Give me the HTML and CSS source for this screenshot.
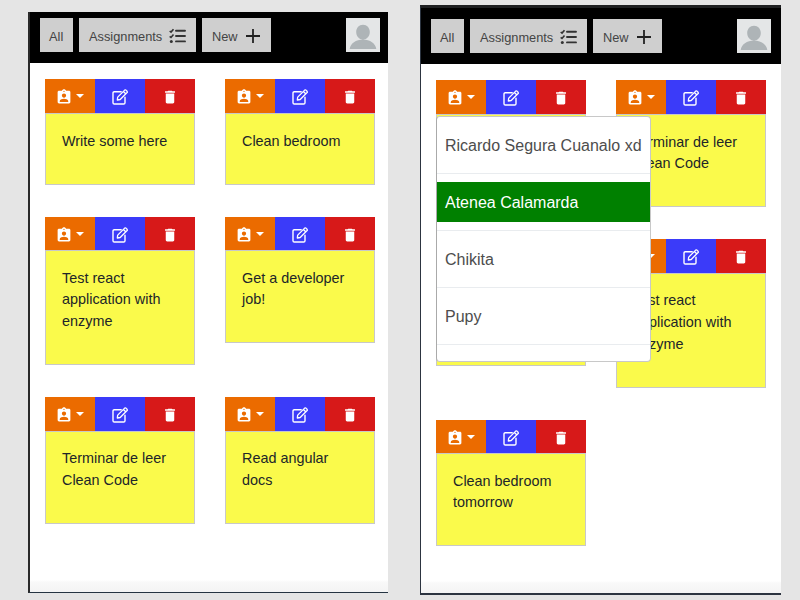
FILE: index.html
```
<!DOCTYPE html>
<html lang="en">
<head>
<meta charset="utf-8">
<title>Notes</title>
<link rel="stylesheet" href="styles.css">
</head>
<body>
<svg class="defs" width="0" height="0" aria-hidden="true">
  <symbol id="tasks" viewBox="0 0 18 16">
    <path d="M7 2.8h9M7 8h9M7 13.4h9" fill="none" stroke="#333" stroke-width="1.9" stroke-linecap="round"/>
    <path d="M.7 3l1.300 1.100L4.500 1.200M.7 8.400L2 9.500l2.500-2.900" fill="none" stroke="#333" stroke-width="1.600"/>
    <circle cx="2.300" cy="13.400" r="1.500" fill="#333"/>
  </symbol>
  <symbol id="plus" viewBox="0 0 16 16">
    <path d="M8 1v14M1 8h14" fill="none" stroke="#222" stroke-width="1.800"/>
  </symbol>
  <symbol id="avatar" viewBox="0 0 34 34">
    <path fill="#aeb4b7" d="M17 6.700c4 0 6.800 3.200 6.800 7.300s-2.900 7.500-6.800 7.500-6.800-3.400-6.800-7.500S13 6.700 17 6.700zM3.700 31c.6-5.600 6.300-9.500 13.300-9.500s12.700 3.900 13.300 9.500z"/>
  </symbol>
  <symbol id="person" viewBox="0 0 24 24">
    <path fill="#fff" d="M19 3h-4.180C14.400 1.840 13.300 1 12 1c-1.300 0-2.400.84-2.820 2H5c-1.100 0-2 .9-2 2v14c0 1.100.9 2 2 2h14c1.100 0 2-.9 2-2V5c0-1.100-.9-2-2-2zm-7 0c.55 0 1 .45 1 1s-.45 1-1 1-1-.45-1-1 .45-1 1-1zm0 4c1.660 0 3 1.340 3 3s-1.340 3-3 3-3-1.340-3-3 1.340-3 3-3zm6 12H6v-1.400c0-2 4-3.100 6-3.100s6 1.100 6 3.100V19z"/>
  </symbol>
  <symbol id="edit" viewBox="0 0 16 16">
    <path d="M9.200 2.700H2.300Q1 2.700 1 4v9.700Q1 15 2.300 15h9.400Q13 15 13 13.700V8.200" fill="none" stroke="#fff" stroke-width="1.400" stroke-linecap="round"/>
    <path d="M5.300 11l.4-2.900 7-7Q13.300.600 13.900 1.100l1.200 1.200q.5.600 0 1.200l-6.900 7zM11.400 2.500l2.300 2.300" fill="none" stroke="#fff" stroke-width="1.300" stroke-linejoin="round"/>
  </symbol>
  <symbol id="trash" viewBox="0 0 24 24">
    <path fill="#fff" d="M6 19c0 1.100.9 2 2 2h8c1.100 0 2-.9 2-2V7H6v12zM19 4h-3.500l-1-1h-5l-1 1H5v2h14V4z"/>
  </symbol>
  <symbol id="tools" viewBox="0 0 150 34">
    <use href="#person" x="10.500" y="9.500" width="17" height="17"/>
    <path fill="#fff" d="M31 15h8l-4 4z"/>
    <use href="#edit" x="67" y="10" width="16" height="16"/>
    <use href="#trash" x="116.500" y="9.500" width="17" height="17"/>
  </symbol>
</svg>

<main class="board">
  <section class="phone phone-left">
    <header class="bar">
      <button class="btn all">All</button>
      <button class="btn assignments">Assignments <svg class="i-tasks"><use href="#tasks"/></svg></button>
      <button class="btn new">New <svg class="i-plus"><use href="#plus"/></svg></button>
      <svg class="avatar"><use href="#avatar"/></svg>
    </header>
    <div class="notes">
      <article class="note"><div class="tools"><svg><use href="#tools"/></svg></div><div class="body"><p>Write some here</p></div></article>
      <article class="note"><div class="tools"><svg><use href="#tools"/></svg></div><div class="body"><p>Clean bedroom</p></div></article>
      <article class="note"><div class="tools"><svg><use href="#tools"/></svg></div><div class="body"><p>Test react application with enzyme</p></div></article>
      <article class="note"><div class="tools"><svg><use href="#tools"/></svg></div><div class="body"><p>Get a developer job!</p></div></article>
      <article class="note"><div class="tools"><svg><use href="#tools"/></svg></div><div class="body"><p>Terminar de leer Clean Code</p></div></article>
      <article class="note"><div class="tools"><svg><use href="#tools"/></svg></div><div class="body"><p>Read angular docs</p></div></article>
    </div>
  </section>

  <section class="phone phone-right">
    <header class="bar">
      <button class="btn all">All</button>
      <button class="btn assignments">Assignments <svg class="i-tasks"><use href="#tasks"/></svg></button>
      <button class="btn new">New <svg class="i-plus"><use href="#plus"/></svg></button>
      <svg class="avatar"><use href="#avatar"/></svg>
    </header>
    <div class="notes">
      <article class="note">
        <div class="tools"><svg><use href="#tools"/></svg></div>
        <div class="body tall"></div>
        <ul class="menu">
          <li><span>Ricardo Segura Cuanalo xd</span></li>
          <li class="active"><span>Atenea Calamarda</span></li>
          <li><span>Chikita</span></li>
          <li><span>Pupy</span></li>
        </ul>
      </article>
      <article class="note"><div class="tools"><svg><use href="#tools"/></svg></div><div class="body"><p>Terminar de leer Clean Code</p></div></article>
      <article class="note"><div class="tools"><svg><use href="#tools"/></svg></div><div class="body tall"></div></article>
      <article class="note"><div class="tools"><svg><use href="#tools"/></svg></div><div class="body"><p>Test react application with enzyme</p></div></article>
      <article class="note"><div class="tools"><svg><use href="#tools"/></svg></div><div class="body"><p>Clean bedroom tomorrow</p></div></article>
    </div>
  </section>
</main>
</body>
</html>
```
FILE: styles.css
```
* {
  box-sizing: border-box;
}

body {
  margin: 0;
  background: #e5e5e5;
  font-family: "Liberation Sans", Arial, sans-serif;
  color: #212529;
}

.defs {
  display: block;
  height: 0;
}

.board {
  display: flex;
  align-items: flex-start;
  gap: 32px;
  height: 600px;
  padding-left: 28px;
  overflow: hidden;
}

.phone {
  flex: none;
  background: linear-gradient(to top, #f4f4f4, #f9f9f9 10px, #fff 12px) #fff;
}

.phone-left {
  width: 360px;
  height: 581px;
  margin-top: 12px;
  border-left: 2px solid #2a2a2a;
  border-bottom: 1px solid #263442;
}

.phone-right {
  width: 361px;
  height: 590px;
  margin-top: 5px;
  border-top: 3px solid #1f2022;
  border-left: 1px solid #2c3440;
  border-bottom: 2px solid #2c3440;
}

.bar {
  display: flex;
  align-items: flex-start;
  gap: 6px;
  height: 51px;
  padding: 6px 8px 0 10px;
  background: #000;
}

.phone-right .bar {
  height: 56px;
  padding: 11px 10px 0 10px;
}

.btn {
  display: flex;
  align-items: center;
  height: 34px;
  padding: 3px 0 0 9px;
  border: 0;
  background: #cfcfcf;
  color: #444;
  font: 12.8px "Liberation Sans", Arial, sans-serif;
}

.all {
  width: 33px;
}

.assignments {
  width: 117px;
  padding-left: 10px;
}

.new {
  width: 69px;
  padding-left: 10px;
}

.i-tasks {
  width: 18px;
  height: 16px;
  margin: 0 0 1px 7px;
}

.i-plus {
  width: 16px;
  height: 16px;
  margin: 0 0 1px 7px;
}

.avatar {
  width: 34px;
  height: 34px;
  margin-left: auto;
  background: #e4e6e7;
}

.notes {
  display: grid;
  grid-template-columns: 150px 150px;
  gap: 32px 30px;
  align-items: start;
  padding: 16.4px 15px 0;
}

.note {
  position: relative;
}

.tools {
  height: 33.6px;
  background: linear-gradient(to right, #eb6b00 50px, #3b3bf9 50px, #3b3bf9 100px, #d71919 100px);
}

.tools svg {
  display: block;
  width: 150px;
  height: 34px;
}

.body {
  min-height: 71.6px;
  padding: 16.7px 16px 15.3px;
  border: 1px solid #c8c8c8;
  background: #fafa4b;
  font-size: 14.4px;
  line-height: 21.6px;
}

.body p {
  margin: 0 0 16px;
}

.tall {
  height: 93.2px;
}

.menu {
  position: absolute;
  z-index: 2;
  top: 35.6px;
  left: 0;
  width: 215px;
  margin: 0;
  padding: 8px 0;
  border: 1px solid #c8c8c8;
  border-left-color: #aaa;
  border-radius: 4px;
  background: #fff;
  list-style: none;
  font-size: 16px;
  line-height: 24px;
  color: #4d4d4d;
}

.menu li {
  height: 40px;
  margin-bottom: 17px;
  padding: 9px 8px 7px;
  white-space: nowrap;
}

.menu li::after {
  content: "";
  position: absolute;
  left: 0;
  right: 0;
  display: block;
  height: 1px;
  margin-top: 15px;
  background: #e9ecef;
}

.menu .active {
  background: #008000;
  color: #fff;
}
```
